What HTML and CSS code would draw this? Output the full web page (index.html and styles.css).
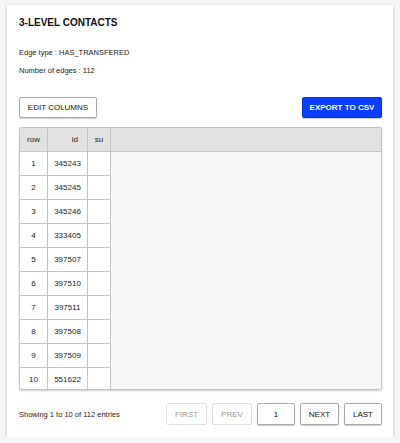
FILE: index.html
```html
<!DOCTYPE html>
<html>
<head>
<meta charset="utf-8">
<link rel="stylesheet" href="styles.css">
</head>
<body>
<div class="card">
  <h1 class="title">3-LEVEL CONTACTS</h1>
  <p class="info">Edge type : HAS_TRANSFERED</p>
  <p class="info">Number of edges : 112</p>
  <div class="toolbar">
    <button class="btn">EDIT COLUMNS</button>
    <button class="btn btn-primary">EXPORT TO CSV</button>
  </div>
  <div class="table-wrap">
    <table class="grid">
      <thead>
        <tr><th class="c-row">row</th><th class="c-id">id</th><th class="c-su">su</th><th class="c-fill"></th></tr>
      </thead>
      <tbody>
        <tr><td>1</td><td>345243</td><td></td><td class="fill" rowspan="10"></td></tr>
        <tr><td>2</td><td>345245</td><td></td></tr>
        <tr><td>3</td><td>345246</td><td></td></tr>
        <tr><td>4</td><td>333405</td><td></td></tr>
        <tr><td>5</td><td>397507</td><td></td></tr>
        <tr><td>6</td><td>397510</td><td></td></tr>
        <tr><td>7</td><td>397511</td><td></td></tr>
        <tr><td>8</td><td>397508</td><td></td></tr>
        <tr><td>9</td><td>397509</td><td></td></tr>
        <tr><td>10</td><td>551622</td><td></td></tr>
      </tbody>
    </table>
  </div>
  <div class="footer">
    <span class="summary">Showing 1 to 10 of 112 entries</span>
    <div class="pager">
      <button class="btn pg w41 disabled">FIRST</button>
      <button class="btn pg w40 disabled">PREV</button>
      <button class="btn pg w38 page">1</button>
      <button class="btn pg w39">NEXT</button>
      <button class="btn pg w38">LAST</button>
    </div>
  </div>
</div>
</body>
</html>
```
FILE: styles.css
```css
html, body {
  margin: 0;
  padding: 0;
  background: #f5f5f5;
  font-family: "Liberation Sans", Arial, sans-serif;
  color: #111;
}
.card {
  margin: 5px 7px 0 7px;
  width: 386px;
  height: 432px;
  box-sizing: border-box;
  background: #fff;
  box-shadow: 0 1px 3px rgba(0,0,0,0.25);
  padding: 12px 11px 0 12px;
  display: flex;
  flex-direction: column;
}
.title {
  margin: 0;
  font-size: 10px;
  font-weight: bold;
  line-height: 12px;
}
.info {
  margin: 0;
  font-size: 7.5px;
  line-height: 10px;
  color: #222;
}
.title + .info { margin-top: 19px; }
.info + .info { margin-top: 8px; }
.toolbar {
  margin-top: 21px;
  display: flex;
  justify-content: space-between;
}
.btn {
  font-family: "Liberation Sans", Arial, sans-serif;
  font-size: 8px;
  background: #fff;
  border: 1px solid #a8a8a8;
  border-radius: 2px;
  box-shadow: 0 1px 1px rgba(0,0,0,0.2);
  color: #111;
  height: 21px;
  padding: 0;
  cursor: pointer;
}
.btn-primary {
  background: #0a3dff;
  color: #fff;
  font-weight: bold;
  border-color: #0a36d8;
  width: 80px;
}
.toolbar .btn:first-child { width: 78px; }
.table-wrap {
  margin-top: 9px;
  border: 1px solid #c4c4c4;
  border-radius: 2px;
  box-shadow: 0 1px 2px rgba(0,0,0,0.2);
  background: #f7f7f7;
  height: 263px;
  box-sizing: border-box;
  overflow: hidden;
}
.grid {
  border-collapse: collapse;
  width: 100%;
  font-size: 8px;
}
.grid th {
  background: #e1e1e1;
  height: 23px;
  padding: 0;
  font-weight: normal;
  color: #222;
  border-right: 1px solid #c4c4c4;
  border-bottom: 1px solid #c4c4c4;
}
.grid th.c-fill { border-right: none; }
.grid th.c-row { width: 27px; }
.grid th.c-id { width: 30px; text-align: right; padding-right: 9px; }
.grid th.c-su { width: 22px; }
.grid td {
  background: #fff;
  height: 23px;
  padding: 0;
  text-align: center;
  border-right: 1px solid #c4c4c4;
  border-bottom: 1px solid #c4c4c4;
  color: #222;
}
.grid td.fill {
  background: #f7f7f7;
  border: none;
}
.grid tbody tr:last-child td { border-bottom: none; }
.footer {
  margin-top: 13px;
  display: flex;
  justify-content: space-between;
  align-items: center;
}
.summary {
  font-size: 7.5px;
  color: #222;
}
.pager {
  display: flex;
  gap: 5px;
}
.pg { height: 22px; }
.w41 { width: 41px; }
.w40 { width: 40px; }
.w39 { width: 39px; }
.w38 { width: 38px; }
.pg.disabled {
  color: #999;
  border-color: #ddd;
  box-shadow: none;
}
```
